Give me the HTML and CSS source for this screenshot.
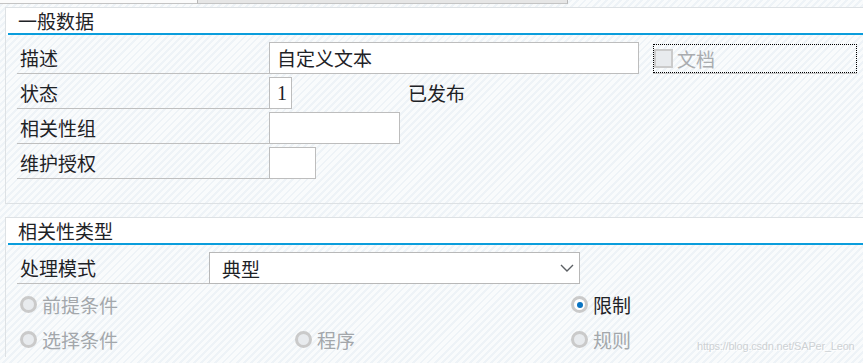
FILE: index.html
```html
<!DOCTYPE html>
<html lang="zh">
<head>
<meta charset="utf-8">
<title>一般数据</title>
<link rel="stylesheet" href="styles.css">
</head>
<body>
<div class="tabs"><div class="tab tab-a"></div><div class="tab tab-b"></div></div>

<section class="panel p1">
  <div class="ph"><div class="pt">一般数据</div></div>
  <div class="pb">
    <div class="row">
      <div class="lbl">描述</div>
      <div class="inp w-desc">自定义文本</div>
      <div class="chk"><span class="cbox"></span><span class="chk-t">文档</span></div>
    </div>
    <div class="row">
      <div class="lbl">状态</div>
      <div class="inp w-1 num">1</div>
      <div class="val">已发布</div>
    </div>
    <div class="row">
      <div class="lbl">相关性组</div>
      <div class="inp w-grp"></div>
    </div>
    <div class="row">
      <div class="lbl">维护授权</div>
      <div class="inp w-auth"></div>
    </div>
  </div>
</section>

<section class="panel p2">
  <div class="ph"><div class="pt">相关性类型</div></div>
  <div class="pb">
    <div class="row">
      <div class="lbl lbl-s">处理模式</div>
      <div class="sel"><span>典型</span>
        <svg class="chev" width="14" height="8" viewBox="0 0 14 8"><polyline points="1,1 7,7 13,1" fill="none" stroke="#5b5f63" stroke-width="1.4"/></svg>
      </div>
    </div>
    <div class="radios">
      <div class="rad dis"><span class="rc"></span>前提条件</div>
      <div class="rad empty"></div>
      <div class="rad on"><span class="rc"><span class="dot"></span></span>限制</div>
      <div class="rad dis"><span class="rc"></span>选择条件</div>
      <div class="rad dis"><span class="rc"></span>程序</div>
      <div class="rad dis"><span class="rc"></span>规则</div>
    </div>
  </div>
</section>

<div class="wm">https://blog.csdn.net/SAPer_Leon</div>
</body>
</html>
```

FILE: styles.css
```css
html, body { margin: 0; padding: 0; }
body {
  width: 863px;
  height: 363px;
  overflow: hidden;
  position: relative;
  font-family: "Noto Sans CJK SC", "Noto Sans", sans-serif;
  font-size: 19px;
  color: #1e2226;
  background: repeating-linear-gradient(135deg, #f9fbfc 0px, #f9fbfc 3px, #eef3f7 3px, #eef3f7 5px);
}
.tabs { display: flex; height: 4px; }
.tab { box-sizing: border-box; height: 4px; border-bottom: 1px solid #c4c4c4; border-right: 1px solid #b8b8b8; }
.tab-a { width: 198px; background: #fbfbfb; }
.tab-b { width: 370px; background: #e6e6e6; }

.panel {
  margin-left: 5px;
  border: 1px solid #dde1e4;
  border-right: none;
}
.p1 { margin-top: 3px; }
.p2 { margin-top: 13px; border-bottom: none; }
.ph { background: #fff; padding-left: 2px; }
.pt {
  height: 25px;
  line-height: 25px;
  padding-left: 10px;
  border-bottom: 2px solid #0a9ddc;
  color: #1e2226;
}
.pb { padding: 7px 0 24px 11px; }
.p2 .pb { padding-bottom: 0; }

.row { display: flex; align-items: flex-start; margin-bottom: 3px; }
.row:last-child { margin-bottom: 0; }
.lbl {
  box-sizing: border-box;
  width: 252px;
  height: 32px;
  line-height: 31px;
  padding-left: 3px;
  border-bottom: 1px solid #bfbfbf;
}
.lbl-s { width: 192px; }
.inp {
  box-sizing: border-box;
  height: 32px;
  line-height: 30px;
  padding-left: 7px;
  border: 1px solid #bdbdbd;
  background: #fff;
}
.w-desc { width: 370px; }
.w-1 { width: 23px; }
.w-grp { width: 131px; }
.w-auth { width: 47px; }
.num { font-family: "Liberation Serif", serif; font-size: 20px; }
.val { margin-left: 116px; line-height: 31px; }

.chk {
  box-sizing: border-box;
  margin-left: 14px;
  margin-top: 2px;
  width: 204px;
  height: 29px;
  border: 1px dotted #000;
  box-shadow: 0 1px 0 #c8c8c8;
  display: flex;
  align-items: center;
  color: #a9acaf;
}
.cbox {
  box-sizing: border-box;
  width: 19px;
  height: 19px;
  border: 2px solid #cbcbcb;
  background: #e8ebee;
  margin-right: 4px;
}

.sel {
  box-sizing: border-box;
  width: 371px;
  height: 32px;
  border: 1px solid #b8b8b8;
  background: #fff;
  display: flex;
  align-items: center;
  padding-left: 12px;
  padding-right: 5px;
}
.chev { margin-left: auto; }

.radios {
  margin-top: 3px;
  padding-left: 3px;
  display: grid;
  grid-template-columns: 275px 276px 1fr;
  grid-auto-rows: 35px;
}
.rad { display: flex; align-items: center; }
.rc {
  box-sizing: border-box;
  width: 17px;
  height: 17px;
  border-radius: 50%;
  border: 3px solid #cacaca;
  background: #e8ebee;
  margin-right: 5px;
  display: flex;
  align-items: center;
  justify-content: center;
}
.dis { color: #a3a7ab; }
.on .rc { background: #fff; }
.dot { width: 6px; height: 6px; border-radius: 50%; background: #0a74c2; }

.wm {
  position: absolute;
  left: 697px;
  top: 340px;
  white-space: nowrap;
  font-family: "Liberation Sans", Arial, sans-serif;
  font-size: 11px;
  letter-spacing: -0.2px;
  color: #cdd1d4;
  text-shadow: 1px 1px 0 #fff;
}
```
